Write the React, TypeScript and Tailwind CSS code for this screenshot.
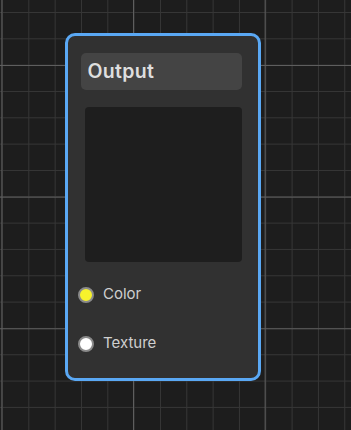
const sockets = [
  { label: "Color", fill: "bg-[#f7f22c]" },
  { label: "Texture", fill: "bg-white" },
];

export default function App() {
  return (
    <div
      className="h-[430px] w-[351px] overflow-hidden bg-[#1d1d1d] bg-[image:linear-gradient(to_right,#5e5e5e_1px,transparent_1px),linear-gradient(to_bottom,#5e5e5e_1px,transparent_1px),linear-gradient(to_right,#363636_1px,transparent_1px),linear-gradient(to_bottom,#363636_1px,transparent_1px)] bg-[size:131.65px_131.65px,131.65px_131.65px,26.33px_26.33px,26.33px_26.33px] bg-[position:133px_65px,133px_65px,2px_12px,2px_12px] pt-[33px] pl-[65px]"
      style={{ fontFamily: "Inter, 'Noto Sans', sans-serif" }}
    >
      <div className="flex h-[348px] w-[196px] flex-col rounded-[10px] border-[3.5px] border-[#5aa8f4] bg-[#313131]">
        <div className="mt-[16.5px] ml-[12.5px] mr-[16.5px] flex h-[37px] items-center rounded-[5px] bg-[#444444] px-[7px] pt-[2px]">
          <span className="text-[19.5px] font-semibold tracking-[0.3px] text-[#dedede]">Output</span>
        </div>
        <div className="mx-[16.5px] mt-[17px] h-[155px] rounded-[4px] bg-[#1e1e1e]" />
        <div className="mt-[25px] flex flex-col gap-[33px]">
          {sockets.map((s) => (
            <div key={s.label} className="flex h-[16px] items-center">
              <span className={`ml-[10px] h-[16px] w-[16px] rounded-full border-[2.5px] border-[#8a8a8a] ${s.fill}`} />
              <span className="ml-[9px] text-[15px] text-[#cfcfcf]">{s.label}</span>
            </div>
          ))}
        </div>
      </div>
    </div>
  );
}
